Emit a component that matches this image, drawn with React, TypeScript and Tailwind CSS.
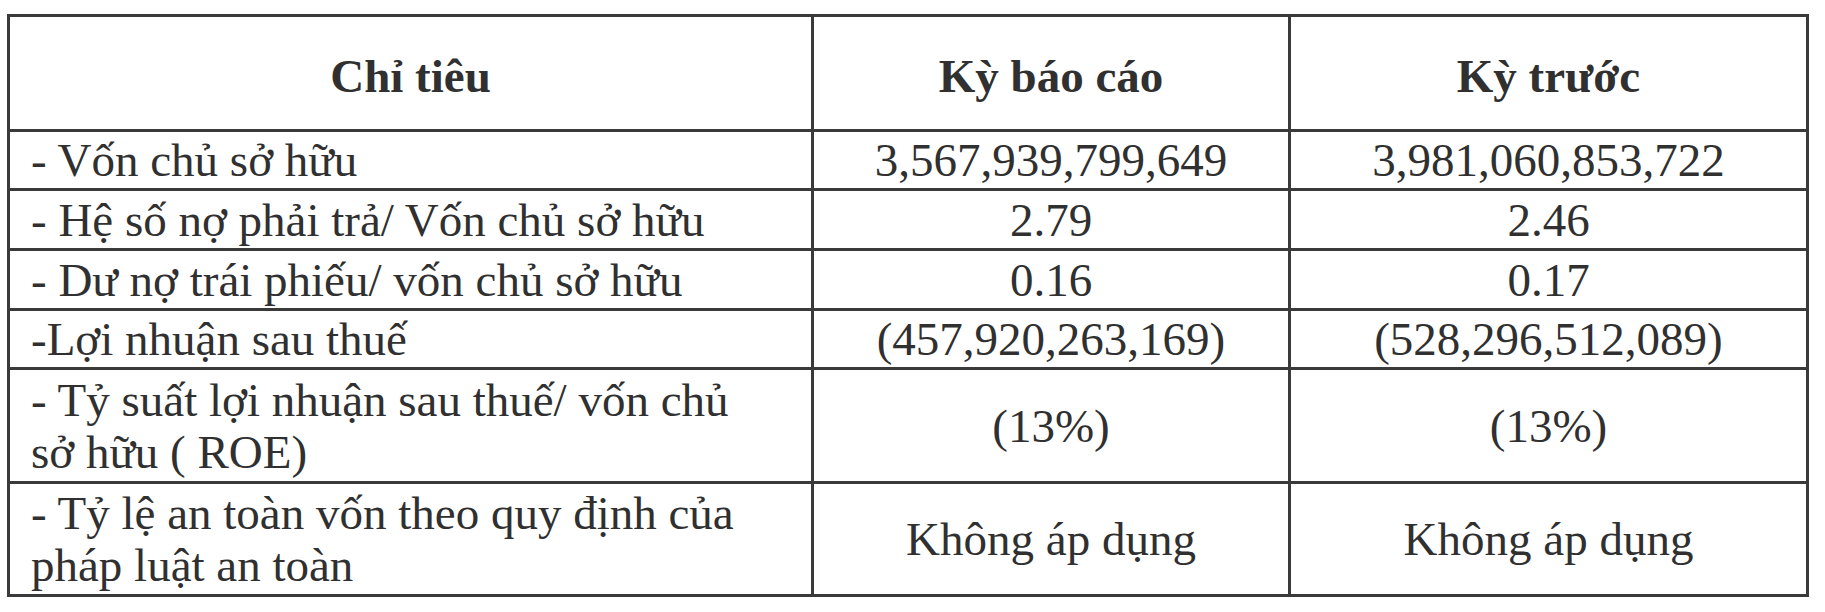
import React from "react";

const rows: { label: string; a: string; b: string; h: string }[] = [
  { label: "- Vốn chủ sở hữu", a: "3,567,939,799,649", b: "3,981,060,853,722", h: "h-[59px]" },
  { label: "- Hệ số nợ phải trả/ Vốn chủ sở hữu", a: "2.79", b: "2.46", h: "h-[60px]" },
  { label: "- Dư nợ trái phiếu/ vốn chủ sở hữu", a: "0.16", b: "0.17", h: "h-[60px]" },
  { label: "-Lợi nhuận sau thuế", a: "(457,920,263,169)", b: "(528,296,512,089)", h: "h-[59px]" },
  { label: "- Tỷ suất lợi nhuận sau thuế/ vốn chủ sở hữu ( ROE)", a: "(13%)", b: "(13%)", h: "h-[114px]" },
];

export default function App() {
  return (
    <div
      className="w-[1825px] h-[612px] bg-white pt-[14px] pl-[7px] text-[#303030]"
      style={{ fontFamily: '"Liberation Serif", "Times New Roman", serif' }}
    >
      <div className="w-[1802px] border-[3px] border-[#3a3a3a] text-[47px] leading-[52px]">
        <div className="grid grid-cols-[804px_477px_515px] h-[115px] border-b-[3px] border-[#3a3a3a] font-bold">
          <div className="flex items-center justify-center border-r-[3px] border-[#3a3a3a] pt-[6px]">Chỉ tiêu</div>
          <div className="flex items-center justify-center border-r-[3px] border-[#3a3a3a] pt-[6px]">Kỳ báo cáo</div>
          <div className="flex items-center justify-center pt-[6px]">Kỳ trước</div>
        </div>
        {rows.map((r, i) => (
          <div key={i} className={`grid grid-cols-[804px_477px_515px] ${r.h} border-b-[3px] border-[#3a3a3a]`}>
            <div className="flex items-center border-r-[3px] border-[#3a3a3a] pl-[21px] pr-[40px]">{r.label}</div>
            <div className="flex items-center justify-center border-r-[3px] border-[#3a3a3a]">{r.a}</div>
            <div className="flex items-center justify-center">{r.b}</div>
          </div>
        ))}
        <div className="grid grid-cols-[804px_477px_515px] h-[110px]">
          <div className="flex items-center border-r-[3px] border-[#3a3a3a] pl-[21px] pr-[40px]">
            - Tỷ lệ an toàn vốn theo quy định của pháp luật an toàn
          </div>
          <div className="flex items-center justify-center border-r-[3px] border-[#3a3a3a]">Không áp dụng</div>
          <div className="flex items-center justify-center">Không áp dụng</div>
        </div>
      </div>
    </div>
  );
}
